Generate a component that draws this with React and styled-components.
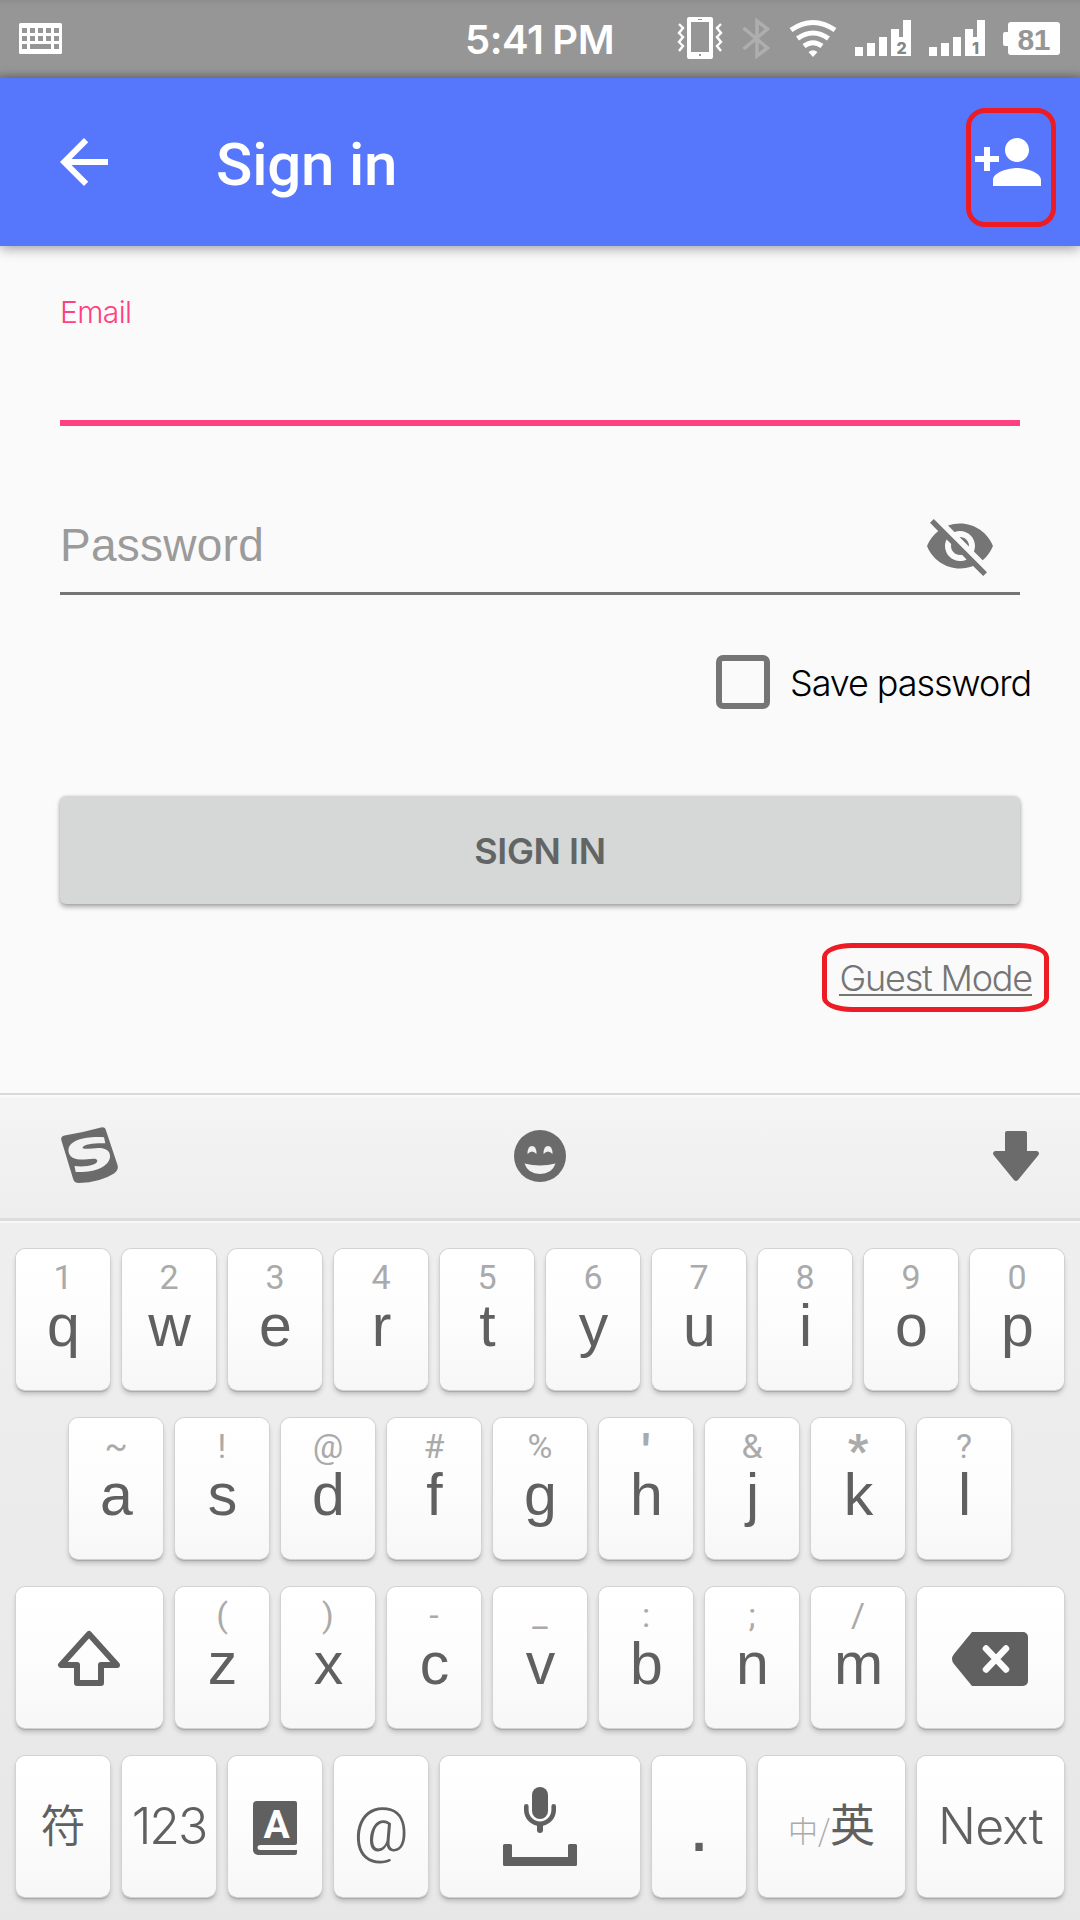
import React from 'react';
import styled, { createGlobalStyle, css } from 'styled-components';

const sans = '"Liberation Sans", Arial, "Noto Sans CJK SC", sans-serif';
const light = 'Inter, "Liberation Sans", "Noto Sans CJK SC", sans-serif';
const roboto = 'Roboto, "Liberation Sans", sans-serif';

const GlobalStyle = createGlobalStyle`
  * { box-sizing: border-box; }
  html, body { margin: 0; padding: 0; }
  body { width: 1080px; height: 1920px; overflow: hidden; background: #fafafa; }
  button { border: 0; margin: 0; padding: 0; background: none; font: inherit; color: inherit; }
  svg { display: block; flex: none; }
`;

const Screen = styled.div`
  width: 1080px;
  height: 1920px;
  display: flex;
  flex-direction: column;
  overflow: hidden;
  background: #fafafa;
  font-family: ${sans};
`;

/* ---------- status bar ---------- */
const StatusBar = styled.header`
  height: 78px;
  display: grid;
  grid-template-columns: 1fr auto 1fr;
  align-items: start;
  background: linear-gradient(#8e8e8e 0, #969696 6px, #969696 70px, #858585 78px);
`;
const StatusLeft = styled.div`
  padding: 23px 0 0 19px;
`;
const Clock = styled.time`
  width: 150px;
  padding-top: 19px;
  font: 600 40px/42px ${light};
  letter-spacing: -0.4px;
  word-spacing: -1px;
  white-space: nowrap;
  color: #fff;
`;
const StatusRight = styled.div`
  height: 78px;
  display: flex;
  justify-content: flex-end;
  padding: 17px 20px 0 0;
`;
const StatusIcon = styled.svg`
  margin-left: ${(p) => p.$gap || 0}px;
`;

/* ---------- app bar ---------- */
const AppBar = styled.div`
  height: 168px;
  display: flex;
  align-items: center;
  padding: 0 36px 0 48px;
  background: #5677fc;
  box-shadow: 0 2px 12px rgba(0, 0, 0, 0.4);
  z-index: 1;
`;
const Title = styled.h1`
  flex: 1;
  margin: 5px 0 0 96px;
  font: 500 60px/70px ${roboto};
  letter-spacing: -0.2px;
  color: #fff;
`;
const IconButton = styled.button`
  position: relative;
  width: 72px;
  height: 72px;
`;
const Highlight = styled.span`
  position: absolute;
  inset: ${(p) => p.$inset};
  border: 5px solid #ed1c24;
  border-radius: ${(p) => p.$radius};
  pointer-events: none;
`;

/* ---------- form ---------- */
const Form = styled.main`
  height: 847px;
  display: flex;
  flex-direction: column;
  padding: 0 60px;
`;
const EmailField = styled.label`
  height: 180px;
  padding-top: 48px;
  border-bottom: 6px solid #ff4081;
  font: 300 30px/36px ${light};
  letter-spacing: -0.6px;
  color: #ff4081;
`;
const PasswordField = styled.label`
  height: 169px;
  display: flex;
  justify-content: space-between;
  padding: 84px 24px 0 0;
  border-bottom: 3px solid #757575;
  font: 46px/70px ${sans};
  letter-spacing: 0.25px;
  color: #9b9b9b;
`;
const SaveRow = styled.label`
  display: flex;
  align-items: center;
  justify-content: flex-end;
  gap: 20px;
  height: 54px;
  margin: 60px -11px 0 0;
  font: 300 36px/54px ${light};
  letter-spacing: -1.1px;
  white-space: nowrap;
  color: #000;
`;
const SaveText = styled.span`
  padding-top: 2px;
`;
const CheckBox = styled.span`
  width: 54px;
  height: 54px;
  border: 6px solid #757575;
  border-radius: 7px;
`;
const SubmitButton = styled.button`
  && {
    height: 108px;
    margin-top: 87px;
    border-radius: 6px;
    background: #d6d8d7;
    box-shadow: 0 3px 5px rgba(0, 0, 0, 0.32), 0 0 3px rgba(0, 0, 0, 0.12);
    font: 600 36px/110px ${light};
    letter-spacing: -0.4px;
    color: #636564;
  }
`;
const GuestLink = styled.a`
  position: relative;
  align-self: flex-end;
  margin: 54px -12px 0 0;
  font: 300 36px/41px ${light};
  letter-spacing: -1.2px;
  color: #757575;
  border-bottom: 2px solid #757575;
  height: 38px;
  white-space: nowrap;
`;

/* ---------- keyboard ---------- */
const Keyboard = styled.section`
  flex: 1;
  display: flex;
  flex-direction: column;
  background: linear-gradient(#f0f0f0, #ececec 45%, #e7e7e7);
`;
const ToolStrip = styled.div`
  height: 128px;
  display: grid;
  grid-template-columns: 1fr auto 1fr;
  align-items: center;
  padding: 0 41px 2px;
  border-top: 2px solid #d9d9d9;
  border-bottom: 3px solid #dddddd;
  background: linear-gradient(#fcfcfc 0, #f4f4f4 4px, #eeeeee 100%);
`;
const ToolSlot = styled.button`
  && {
    justify-self: ${(p) => p.$side || 'center'};
    margin-left: ${(p) => (p.$side === 'start' ? 20 : 0)}px;
  }
`;
const Keys = styled.div`
  flex: 1;
  display: flex;
  flex-direction: column;
  gap: 28px;
  padding-top: 26px;
  border-top: 2px solid #f7f7f7;
`;
const KeyRow = styled.div`
  display: flex;
  justify-content: center;
  gap: 12px;
  height: 141px;
`;
const Key = styled.button`
  && {
    width: ${(p) => p.$w || 94}px;
    height: 141px;
    display: flex;
    flex-direction: column;
    align-items: center;
    ${(p) => p.$center && css`justify-content: center;`}
    border-radius: 9px;
    background: linear-gradient(#ffffff, #fdfdfd 45%, #f7f7f7);
    box-shadow: 0 0 0 1px #d2d2d2, 0 2px 1px #a8a8a8, 0 4px 5px rgba(0, 0, 0, 0.2);
    color: #606060;
  }
`;
const Hint = styled.span`
  height: 32px;
  margin-top: 12px;
  font: ${(p) => (p.$strong ? 900 : 400)} ${(p) => (p.$strong ? 44 : 34)}px/${(p) => (p.$strong ? 42 : 32)}px ${roboto};
  color: #aaaaaa;
`;
const Letter = styled.span`
  height: 60px;
  margin-top: 3px;
  padding-left: 1px;
  font: 59px/60px ${sans};
  color: #606060;
`;
const KeyText = styled.span`
  display: flex;
  align-items: baseline;
  white-space: nowrap;
  font: ${(p) => p.$font};
  letter-spacing: ${(p) => p.$track || 0}px;
  padding-top: ${(p) => p.$drop || 0}px;
  padding-bottom: ${(p) => p.$lift || 0}px;
`;
const Faint = styled.small`
  font: 300 30px/60px "Noto Sans CJK SC", sans-serif;
  color: #aaaaaa;
`;

function SignalIcon({ slot, gap }) {
  return (
    <StatusIcon $gap={gap} width="56" height="42" fill="#fff">
      <rect x="0" y="30" width="8" height="9" />
      <rect x="12" y="26" width="8" height="13" />
      <rect x="24" y="20" width="8" height="19" />
      <path d="M36 12h8v8h4V3h8v36H36z" />
      <text x="46.5" y="36.500" textAnchor="middle" fontFamily="Inter, sans-serif" fontWeight="800" fontSize="16" fill="#858585">{slot}</text>
    </StatusIcon>
  );
}

function StatusIcons() {
  return (
    <StatusRight>
      <StatusIcon width="47" height="42" fill="#fff">
        <path fillRule="evenodd" d="M12 0h22a2 2 0 0 1 2 2v38a2 2 0 0 1-2 2H12a2 2 0 0 1-2-2V2a2 2 0 0 1 2-2zM14 5v30h18V5zM21 2v1h4V2zM22 37v2h2v-2z" />
        <path d="M2 7l4 4-4 5 4 4-4 5 4 4-4 5M44 7l-4 4 4 5-4 4 4 5-4 4 4 5" fill="none" stroke="#fff" strokeWidth="2.4" />
      </StatusIcon>
      <StatusIcon $gap={18} width="30" height="42" fill="none" stroke="#aeaeae" strokeWidth="3.5">
        <path d="M1.500 11l24 20L15 39V4l10.500 8-24 20" />
      </StatusIcon>
      <StatusIcon $gap={17} width="48" height="42" fill="none" stroke="#fff" strokeWidth="5">
        <path d="M2 13Q24-2 46 13M8.500 21.500Q24 10.500 39.500 21.500M15 29Q24 22.500 33 29" />
        <path d="M19.500 35q4.500-3.500 9 0L24 40z" fill="#fff" stroke="none" />
      </StatusIcon>
      <SignalIcon slot="2" gap={18} />
      <SignalIcon slot="1" gap={18} />
      <StatusIcon $gap={18} width="57" height="42">
        <path d="M8 5h46a3 3 0 0 1 3 3v27a3 3 0 0 1-3 3H8a3 3 0 0 1-3-3v-6H2a2 2 0 0 1-2-2V17a2 2 0 0 1 2-2h3V8a3 3 0 0 1 3-3z" fill="#fff" />
        <text x="31" y="32.500" textAnchor="middle" textLength="33" fontFamily="Liberation Sans, sans-serif" fontWeight="700" fontSize="30" fill="#969696">81</text>
      </StatusIcon>
    </StatusRight>
  );
}

const KeyboardGlyph = () => (
  <svg width="43" height="31">
    <rect width="43" height="31" rx="1.500" fill="#fff" />
    <path fill="#969696" d="M3 5h5v5H3zM11 5h5v5h-5zM19 5h5v5h-5zM27 5h5v5h-5zM35 5h5v5h-5zM3 13h5v5H3zM11 13h5v5h-5zM19 13h5v5h-5zM27 13h5v5h-5zM35 13h5v5h-5zM3 21h5v5H3zM11 21h21v5H11zM35 21h5v5h-5z" />
  </svg>
);

const MaterialIcon = ({ d, color = '#fff' }) => (
  <svg width="72" height="72" viewBox="0 0 24 24" fill={color}><path d={d} /></svg>
);
const BACK = 'M20 11H7.830l5.590-5.590L12 4l-8 8 8 8 1.410-1.410L7.830 13H20v-2z';
const PERSON_ADD = 'M15 12c2.210 0 4-1.790 4-4s-1.790-4-4-4-4 1.790-4 4 1.790 4 4 4zm-9-2V7H4v3H1v2h3v3h2v-3h3v-2H6zm9 4c-2.670 0-8 1.340-8 4v2h16v-2c0-2.660-5.330-4-8-4z';
const EYE_OFF = 'M12 7c2.760 0 5 2.240 5 5 0 .65-.13 1.260-.36 1.830l2.920 2.920c1.510-1.260 2.700-2.890 3.430-4.750-1.730-4.390-6-7.500-11-7.500-1.400 0-2.740.25-3.980.7l2.160 2.160C10.740 7.130 11.350 7 12 7zM2 4.270l2.280 2.280.46.46C3.080 8.300 1.780 10.020 1 12c1.730 4.390 6 7.500 11 7.500 1.550 0 3.030-.3 4.380-.84l.42.42L19.730 22 21 20.730 3.270 3 2 4.270zM7.530 9.800l1.550 1.550c-.05.21-.08.43-.08.65 0 1.660 1.340 3 3 3 .22 0 .44-.03.65-.08l1.550 1.550c-.67.33-1.410.53-2.200.53-2.760 0-5-2.240-5-5 0-.79.2-1.530.53-2.200zm4.310-.78l3.150 3.150.02-.16c0-1.660-1.340-3-3-3l-.17.01z';

const SogouLogo = () => (
  <svg width="58" height="57" viewBox="0 0 58 57">
    <path d="M3.500 8.500Q22 5.500 40 .5q4-1 5 3L56.500 38q1.500 5-3.500 8.500-14 9-35 9.500-5 0-6-4.500L.3 13Q-.5 9.300 3.500 8.500z" fill="#6b6b6b" />
    <path d="M43 10.300L44.300 16.300C34 16 23 17 21.500 20.500C22 23.500 33 20.500 39 21C46 21.500 49.500 25 49 30C48 40 33 46 14.700 45L13.500 39C24 40.500 37 38 36.300 33.500C35.500 30 26 32.800 19 32.500C11 32 7 28.500 7.500 22C9 13 25 9 43 10.300Z" fill="#f2f2f2" />
  </svg>
);
const FaceIcon = () => (
  <svg width="52" height="52">
    <circle cx="26" cy="26" r="26" fill="#6b6b6b" />
    <path d="M10.500 33.500q15.500 4 31 0Q38 44 26 44T10.500 33.500zM13.500 24q0-8 4.500-8t4.500 8q-4.500-5-9 0zM29.500 24q0-8 4.500-8t4.500 8q-4.500-5-9 0z" fill="#f2f2f2" />
  </svg>
);
const DownIcon = () => (
  <svg width="46" height="50">
    <path d="M14 0h18q2 0 2 2v18h10q3 1 1.500 4L25 49q-2 2-4 0L.5 24Q-1 21 2 20h10V2q0-2 2-2z" fill="#6b6b6b" />
  </svg>
);
const ShiftIcon = () => (
  <svg width="66" height="58" fill="none" stroke="#606060" strokeWidth="6" strokeLinejoin="round">
    <path d="M32 5L4 36h16v18h24V36h16z" />
  </svg>
);
const BackspaceIcon = () => (
  <svg width="78" height="56">
    <path d="M20 2h51a5 5 0 0 1 5 5v44a5 5 0 0 1-5 5H20L2 34q-4-5 0-10z" fill="#606060" />
    <path d="M34 18.500l20 21m0-21l-20 21" stroke="#fbfbfb" strokeWidth="6.500" strokeLinecap="round" />
  </svg>
);
const BookIcon = () => (
  <svg width="44" height="56">
    <path d="M4 2h38a2 2 0 0 1 2 2v40a2 2 0 0 1-2 2H7.500q-3 0-3 2.500t3 2.500H44v3a2 2 0 0 1-2 2H5a5 5 0 0 1-5-5V6a4 4 0 0 1 4-4z" fill="#606060" />
    <text x="23.500" y="38.500" textAnchor="middle" fontFamily="Roboto, sans-serif" fontWeight="700" fontSize="39" fill="#fdfdfd">A</text>
  </svg>
);
const SpaceIcon = () => (
  <svg width="74" height="79" fill="none" stroke="#606060">
    <rect x="29" y="0" width="16" height="32" rx="8" fill="#606060" stroke="none" />
    <path d="M23.300 19.300v3.700a13.700 13.700 0 0 0 27.400 0v-3.700" strokeWidth="4.600" strokeLinecap="round" />
    <path d="M37 38v5" strokeWidth="6" strokeLinecap="round" />
    <path d="M1.500 57h6q1.500 0 1.500 1.500V70h56V58.500q0-1.500 1.500-1.500h6q1.500 0 1.500 1.500v19q0 1.500-1.500 1.500h-71Q0 79 0 77.500v-19Q0 57 1.500 57z" fill="#606060" stroke="none" />
  </svg>
);

const ROW1 = ['1q', '2w', '3e', '4r', '5t', '6y', '7u', '8i', '9o', '0p'];
const ROW2 = ['~a', '!s', '@d', '#f', '%g', "'h", '&j', '*k', '?l'];
const ROW3 = ['(z', ')x', '-c', '_v', ':b', ';n', '/m'];

const LetterKeys = ({ keys }) => keys.map(([hint, letter]) => (
  <Key key={letter}>
    <Hint $strong={hint === "'" || hint === '*'}>{hint}</Hint>
    <Letter>{letter}</Letter>
  </Key>
));

export default function App() {
  return (
    <Screen>
      <GlobalStyle />
      <StatusBar>
        <StatusLeft><KeyboardGlyph /></StatusLeft>
        <Clock>5:41 PM</Clock>
        <StatusIcons />
      </StatusBar>

      <AppBar>
        <IconButton><MaterialIcon d={BACK} /></IconButton>
        <Title>Sign in</Title>
        <IconButton>
          <MaterialIcon d={PERSON_ADD} />
          <Highlight $inset="-18px -12px -29px -6px" $radius="19px" />
        </IconButton>
      </AppBar>

      <Form>
        <EmailField>Email</EmailField>
        <PasswordField>
          Password
          <MaterialIcon d={EYE_OFF} color="#757575" />
        </PasswordField>
        <SaveRow><CheckBox /><SaveText>Save password</SaveText></SaveRow>
        <SubmitButton>SIGN IN</SubmitButton>
        <GuestLink>
          Guest Mode
          <Highlight $inset="-15px -17px -18px -17px" $radius="30px / 14px" />
        </GuestLink>
      </Form>

      <Keyboard>
        <ToolStrip>
          <ToolSlot $side="start"><SogouLogo /></ToolSlot>
          <ToolSlot><FaceIcon /></ToolSlot>
          <ToolSlot $side="end"><DownIcon /></ToolSlot>
        </ToolStrip>
        <Keys>
          <KeyRow><LetterKeys keys={ROW1} /></KeyRow>
          <KeyRow><LetterKeys keys={ROW2} /></KeyRow>
          <KeyRow>
            <Key $w={147} $center><ShiftIcon /></Key>
            <LetterKeys keys={ROW3} />
            <Key $w={147} $center><BackspaceIcon /></Key>
          </KeyRow>
          <KeyRow>
            <Key $center><KeyText $font={'350 45px/60px "Noto Sans CJK SC", sans-serif'} $lift={5}>符</KeyText></Key>
            <Key $center><KeyText $font={`300 50px/60px ${light}`} $track={-2} $lift={2}>123</KeyText></Key>
            <Key $center><BookIcon /></Key>
            <Key $center><KeyText $font={`300 61px/70px ${roboto}`} $drop={6}>@</KeyText></Key>
            <Key $w={200} $center><SpaceIcon /></Key>
            <Key $center><KeyText $font={`76px/70px ${sans}`} $lift={4}>.</KeyText></Key>
            <Key $w={147} $center>
              <KeyText $font={'400 45px/60px "Noto Sans CJK SC", sans-serif'} $lift={1}><Faint>中/</Faint>英</KeyText>
            </Key>
            <Key $w={147} $center><KeyText $font={`300 50px/60px ${light}`} $track={-0.8} $lift={2}>Next</KeyText></Key>
          </KeyRow>
        </Keys>
      </Keyboard>
    </Screen>
  );
}
